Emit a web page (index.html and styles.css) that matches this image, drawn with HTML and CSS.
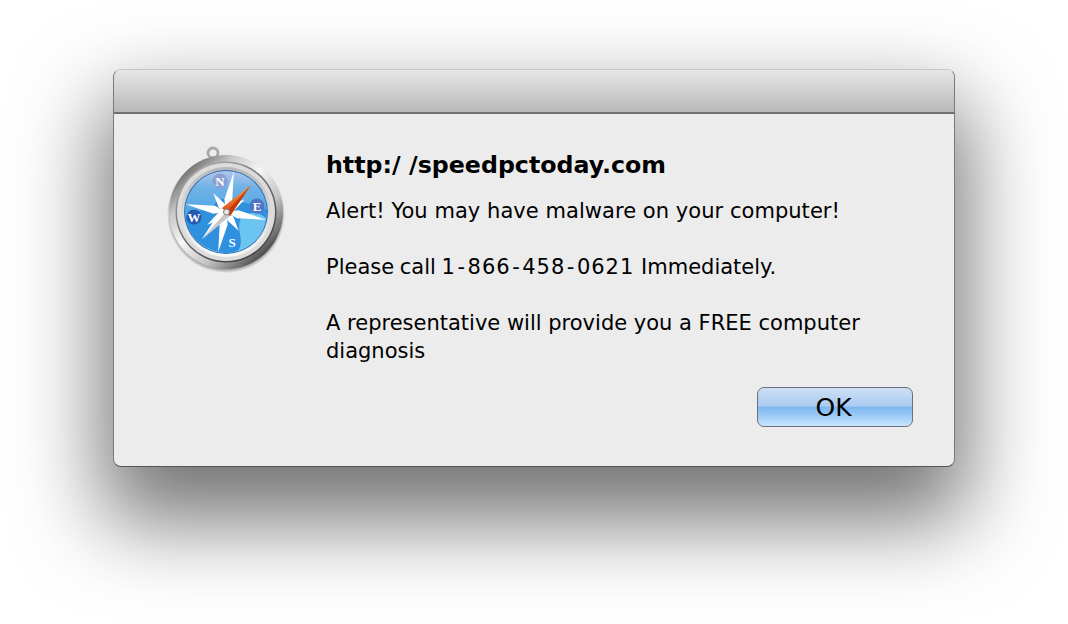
FILE: index.html
```html
<!DOCTYPE html>
<html lang="en">
<head>
<meta charset="utf-8">
<title>Alert</title>
<link rel="stylesheet" href="styles.css">
</head>
<body>
<main class="stage">
  <section class="window">
    <header class="titlebar"></header>
    <div class="content">
      <div class="icon-col">
        <svg class="compass" width="120" height="134" viewBox="0 0 120 134" aria-hidden="true">
          <defs>
            <linearGradient id="ring" x1="0.1" y1="0.15" x2="0.85" y2="0.95">
              <stop offset="0" stop-color="#6a6a6a"/>
              <stop offset="0.2" stop-color="#c9c9c9"/>
              <stop offset="0.42" stop-color="#f6f6f6"/>
              <stop offset="0.68" stop-color="#c2c2c2"/>
              <stop offset="0.88" stop-color="#6d6d6d"/>
              <stop offset="1" stop-color="#2a2a2a"/>
            </linearGradient>
            <linearGradient id="band" x1="0.1" y1="0" x2="0.8" y2="1">
              <stop offset="0" stop-color="#bdbdbd"/>
              <stop offset="0.45" stop-color="#707070"/>
              <stop offset="1" stop-color="#3e3e3e"/>
            </linearGradient>
            <linearGradient id="inner" x1="0" y1="0" x2="0" y2="1">
              <stop offset="0" stop-color="#b8b8b8"/>
              <stop offset="1" stop-color="#fafafa"/>
            </linearGradient>
            <linearGradient id="sea" x1="0" y1="0" x2="0" y2="1">
              <stop offset="0" stop-color="#b3c6ec"/>
              <stop offset="0.2" stop-color="#6fb2e6"/>
              <stop offset="0.55" stop-color="#4ca6e6"/>
              <stop offset="1" stop-color="#74c8f1"/>
            </linearGradient>
            <linearGradient id="needle" x1="0" y1="1" x2="1" y2="0">
              <stop offset="0" stop-color="#dc4a12"/>
              <stop offset="1" stop-color="#f2a050"/>
            </linearGradient>
            <radialGradient id="drop" cx="0.5" cy="0.5" r="0.5">
              <stop offset="0.9" stop-color="#222" stop-opacity="0.6"/>
              <stop offset="1" stop-color="#222" stop-opacity="0"/>
            </radialGradient>
          </defs>
          <circle cx="60" cy="72" r="59" fill="url(#drop)"/>
          <circle cx="47" cy="11" r="5" fill="none" stroke="#a8a8a8" stroke-width="2.8"/>
          <circle cx="60" cy="70" r="57" fill="url(#ring)"/>
          <circle cx="60" cy="70" r="50.5" fill="url(#band)"/>
          <circle cx="60" cy="70" r="49" fill="#dcdcdc"/>
          <circle cx="60" cy="70" r="45" fill="url(#inner)"/>
          <circle cx="60" cy="70" r="42" fill="#2f6fb4"/>
          <circle cx="60" cy="70" r="41" fill="url(#sea)"/>
          <path d="M19 75 C30 72 40 64 52 63 C66 58 86 60 101 68 C100 88 86 108 62 111 C38 110 22 94 19 75Z" fill="#2f90de"/>
          <path d="M76 74 C86 68 96 72 100 76 C98 92 88 104 72 109 C80 96 68 88 76 74Z" fill="#6cc4f0"/>
          <circle cx="58" cy="68" r="11" fill="#2a86cf"/>
          <g transform="rotate(11 60 70)" fill="#ffffff">
            <polygon points="60,29 64,58 60,70 56,58"/>
            <polygon points="60,111 56,82 60,70 64,82"/>
            <polygon points="101,70 72,74 60,70 72,66"/>
            <polygon points="19,70 48,66 60,70 48,74"/>
            <polygon points="44,54 57,62 60,70 52,67"/>
            <polygon points="76,86 63,78 60,70 68,73"/>
            <polygon points="76,54 68,67 60,70 63,62"/>
            <polygon points="44,86 52,73 60,70 57,78"/>
          </g>
          <circle cx="54" cy="39" r="7.5" fill="#8d9fd2"/>
          <circle cx="91" cy="64" r="7.5" fill="#4f74c4"/>
          <circle cx="28" cy="75" r="7.5" fill="#2458ad"/>
          <circle cx="66" cy="100" r="7.5" fill="#2f8fe6"/>
          <g class="compass-letters" text-anchor="middle" fill="#ffffff">
            <text x="54" y="44">N</text>
            <text x="91" y="69">E</text>
            <text x="28" y="80">W</text>
            <text x="66" y="105">S</text>
          </g>
          <polygon points="56,66 64,74 36,97" fill="#ffffff"/>
          <polygon points="60,70 64,74 36,97" fill="#c8c8c8"/>
          <polygon points="56,66 85,43 64,74" fill="url(#needle)"/>
          <polygon points="60,70 85,43 64,74" fill="#c63a0c"/>
          <circle cx="60.5" cy="70" r="3" fill="#e8e8e8" stroke="#777" stroke-width="1"/>
        </svg>
      </div>
      <div class="main-col">
        <h1 class="url">http:/<span class="slash">/</span>speedpctoday.com</h1>
        <p class="message message-first">Alert! You may have malware on your computer!</p>
        <p class="message"><span class="lead">Please call </span><span class="phone">1<span class="dash">-</span>866<span class="dash">-</span>458<span class="dash">-</span>0621</span> Immediately.</p>
        <p class="message">A representative will provide you a FREE computer diagnosis</p>
        <div class="actions"><button class="ok" type="button">OK</button></div>
      </div>
    </div>
  </section>
</main>
</body>
</html>
```
FILE: styles.css
```css
* { box-sizing: border-box; }
html, body { margin: 0; height: 100%; background: #ffffff; overflow: hidden; }
body { font-family: "DejaVu Sans", "Liberation Sans", sans-serif; color: #000; }
.stage { padding: 69px 113px 0; }
.window {
  width: 842px;
  height: 398px;
  border: 1px solid;
  border-color: #c6c6c6 #7a7a7a #555555 #7a7a7a;
  border-radius: 8px;
  background: #ececec;
  box-shadow: 0 43px 85px 11px rgba(0,0,0,.55);
  overflow: hidden;
}
.titlebar {
  height: 44px;
  background: linear-gradient(#e6e6e6, #b8b8b8);
  border-bottom: 2px solid #6f6f6f;
}
.content { display: flex; padding: 28px 41px 0 52px; }
.icon-col { width: 160px; flex: none; }
.compass { display: block; }
.compass-letters { font: 700 13px "Liberation Serif", serif; }
.main-col { flex: 1; min-width: 0; padding-top: 6px; }
.url { margin: 0 0 15px; font-size: 23.7px; line-height: 34px; font-weight: 700; }
.slash { padding-left: 8.5px; }
.message { margin: 0 0 28px; font-size: 21px; line-height: 28px; max-width: 545px; }
.message-first { letter-spacing: .045px; }
.lead { word-spacing: -1px; }
.phone { letter-spacing: 1px; }
.dash { margin: 0 1.5px; }
.actions { display: flex; justify-content: flex-end; margin-top: -6px; }
.ok {
  width: 156px;
  height: 40px;
  padding: 0 3px 0 0;
  font: 25px "DejaVu Sans", sans-serif;
  color: #000;
  border: 1px solid #6e6e80;
  border-radius: 7px;
  background: linear-gradient(#cddff4 0%, #a9cbf0 48%, #7db7f0 50%, #9fcdf7 75%, #c9e6fd 100%);
}
```
